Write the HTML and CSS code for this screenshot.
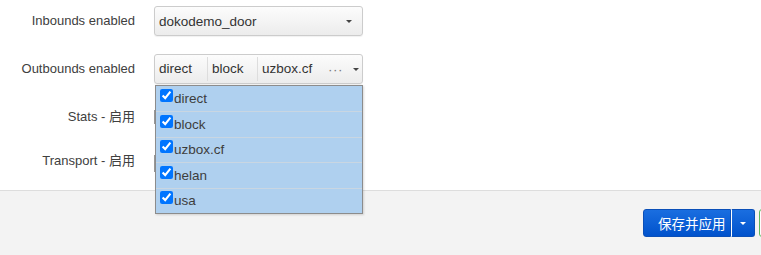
FILE: index.html
```html
<!DOCTYPE html>
<html lang="zh-CN">
<head>
    <meta charset="UTF-8">
    <title>V2Ray 设置</title>
    <link rel="stylesheet" href="styles.css">
</head>
<body>
    <div class="section">
        <div class="row row-first">
            <label class="label">Inbounds enabled</label>
            <div class="field">
                <div class="select">
                    <span class="select-text">dokodemo_door</span>
                    <span class="caret"></span>
                </div>
            </div>
        </div>

        <div class="row">
            <label class="label">Outbounds enabled</label>
            <div class="field">
                <div class="select multi">
                    <span class="chip">direct</span>
                    <span class="chip">block</span>
                    <span class="chip">uzbox.cf</span>
                    <span class="more">···</span>
                    <span class="caret"></span>
                </div>
                <ul class="dropdown">
                    <li><input type="checkbox" checked>direct</li>
                    <li><input type="checkbox" checked>block</li>
                    <li><input type="checkbox" checked>uzbox.cf</li>
                    <li><input type="checkbox" checked>helan</li>
                    <li><input type="checkbox" checked>usa</li>
                </ul>
            </div>
        </div>

        <div class="row">
            <label class="label">Stats - 启用</label>
            <div class="field">
                <span class="hidden-box small"></span>
            </div>
        </div>

        <div class="row">
            <label class="label">Transport - 启用</label>
            <div class="field">
                <span class="hidden-box"></span>
            </div>
        </div>
    </div>

    <div class="footer">
        <div class="btn-group">
            <button class="btn primary">保存并应用</button>
            <button class="btn primary caret-btn"><span class="caret white"></span></button>
        </div>
        <button class="btn save" aria-label="保存"></button>
    </div>
</body>
</html>
```

FILE: styles.css
```css
* {
    margin: 0;
    padding: 0;
    box-sizing: border-box;
}

body {
    font-family: 'Liberation Sans', Arial, 'Noto Sans CJK SC', sans-serif;
    font-size: 13px;
    color: #404040;
    background: white;
    height: 255px;
    overflow: hidden;
}

.section {
    height: 190px;
    padding-top: 6px;
}

.row {
    display: grid;
    grid-template-columns: 135px 209px;
    column-gap: 19px;
    align-items: center;
    height: 30px;
    margin-bottom: 18px;
}

.row .label {
    margin-top: -2px;
}

.row:nth-child(3) {
    margin-top: -1px;
    margin-bottom: 14px;
}

.label {
    text-align: right;
}

.field {
    position: relative;
    height: 30px;
    display: flex;
    align-items: center;
}

.select {
    display: flex;
    align-items: center;
    width: 209px;
    height: 30px;
    padding: 0 10px 0 4px;
    border: 1px solid #ccc;
    border-radius: 3px;
    background: linear-gradient(#fcfcfc, #ececec);
    box-shadow: 0 1px 1px rgba(0,0,0,0.06);
    color: #333;
    font-size: 13.5px;
}

.select-text {
    flex: 1;
}

.caret {
    display: inline-block;
    width: 0;
    height: 0;
    border-left: 3px solid transparent;
    border-right: 3px solid transparent;
    border-top: 3px solid #444;
}

.caret.white {
    border-top-color: white;
}

.multi {
    padding-left: 0;
}

.chip {
    flex-shrink: 0;
    padding: 0 4px;
    line-height: 24px;
    border-right: 1px solid #ddd;
}

.chip:nth-child(1) {
    width: 53px;
}

.chip:nth-child(2) {
    width: 50px;
}

.chip:nth-child(3) {
    border-right: none;
    width: 70px;
}

.more {
    color: #777;
    letter-spacing: 0.5px;
    margin-right: 10px;
}

.dropdown {
    position: absolute;
    top: 31px;
    left: 1px;
    width: 208px;
    list-style: none;
    background: #afd0ef;
    border: 1px solid #8c8c8c;
    box-shadow: 1px 1px 2px rgba(0,0,0,0.15);
    z-index: 10;
}

.dropdown li {
    display: flex;
    align-items: center;
    height: 25.4px;
    padding-left: 3px;
    border-top: 1px solid #c9d6e2;
    font-size: 13.5px;
    color: #3d3d3d;
}

.dropdown li:first-child {
    border-top: none;
}

.dropdown input {
    width: 13px;
    height: 13px;
    margin: -6px 1px 0 1px;
    accent-color: #0075ff;
}

.hidden-box {
    display: block;
    width: 20px;
    height: 17px;
    border-left: 1px solid #999;
    margin-top: 6px;
}

.hidden-box.small {
    height: 14px;
    margin-top: 2px;
}

.footer {
    height: 65px;
    background: #f3f3f3;
    border-top: 1px solid #ddd;
    padding: 18px 0 0 643px;
    display: flex;
    align-items: flex-start;
    gap: 4px;
    white-space: nowrap;
    overflow: hidden;
}

.btn-group {
    display: flex;
}

.btn {
    height: 28px;
    border-radius: 3px;
    font-family: 'Noto Sans CJK SC', sans-serif;
    font-size: 13.5px;
    cursor: pointer;
}

.btn.primary {
    background: linear-gradient(#1a6ee0, #0052cc);
    border: 1px solid #0a4fb8;
    color: white;
    padding: 0 14px;
    border-radius: 3px 0 0 3px;
    width: 88px;
}

.btn.caret-btn {
    width: 24px;
    padding: 0;
    border-left: 1px solid white;
    border-radius: 0 3px 3px 0;
    display: flex;
    align-items: center;
    justify-content: center;
}

.btn.save {
    width: 40px;
    flex-shrink: 0;
    background: white;
    border: 1px solid #5cb85c;
}
```
